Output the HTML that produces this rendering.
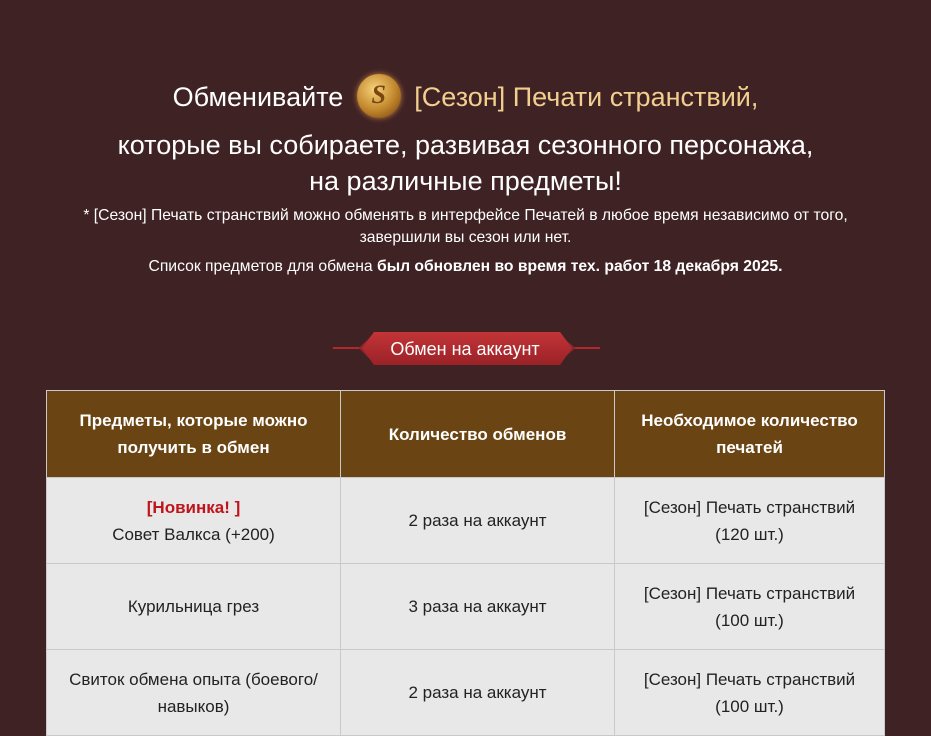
<!DOCTYPE html>
<html><head><meta charset="utf-8"><style>
body{margin:0;background:#3f2224;font-family:"Liberation Sans",sans-serif;width:931px;height:732px;overflow:hidden;position:relative;color:#fff}
.t{position:absolute;left:0;width:931px;text-align:center}
.big{font-size:27px;line-height:32px}
.sm{font-size:15.7px;line-height:22px}
.gold{color:#f2cf8e}
table{position:absolute;left:46px;top:390px;width:839px;border-collapse:collapse;font-size:17px}
td,th{border:1px solid #c9c9c9;text-align:center;line-height:27px;padding:0}
th{background:#6b4413;color:#fff;font-weight:bold;height:86px;padding:0 20px}
td{background:#e8e8e8;color:#222;height:85px}
</style></head><body>
<div class="t big" style="top:74px">Обменивайте <span style="display:inline-block;width:44px;height:44px;vertical-align:-12px;margin:0 6px;border-radius:50%;background:radial-gradient(circle at 40% 35%,#f6d27a,#c0852a 55%,#6a3a10 100%);box-shadow:0 0 6px #c08040;position:relative"><span style="position:absolute;left:0;right:0;top:6px;font:bold italic 26px 'Liberation Serif',serif;color:#7a4510;text-align:center">S</span></span> <span class="gold">[Сезон] Печати странствий,</span></div>
<div class="t big" style="top:129px">которые вы собираете, развивая сезонного персонажа,</div>
<div class="t big" style="top:165px">на различные предметы!</div>
<div class="t sm" style="top:205px">* [Сезон] Печать странствий можно обменять в интерфейсе Печатей в любое время независимо от того,<br>завершили вы сезон или нет.</div>
<div class="t sm" style="top:256px">Список предметов для обмена <b>был обновлен во время тех. работ 18 декабря 2025.</b></div>
<svg style="position:absolute;left:330px;top:328px" width="272" height="42">
<line x1="3" y1="20" x2="40" y2="20" stroke="#b3282c" stroke-width="2"/>
<line x1="235" y1="20" x2="270" y2="20" stroke="#b3282c" stroke-width="2"/>
<path d="M44 7 L30 20 L44 34" fill="none" stroke="#8a2528" stroke-width="2"/>
<path d="M228 7 L244 20 L228 34" fill="none" stroke="#8a2528" stroke-width="2"/>
<defs><linearGradient id="g" x1="0" y1="0" x2="0" y2="1"><stop offset="0" stop-color="#c33437"/><stop offset="1" stop-color="#9a2227"/></linearGradient></defs>
<path d="M44 4 L230 4 L242 20 L230 37 L44 37 L32 20 Z" fill="url(#g)"/>
<text x="135" y="27" text-anchor="middle" font-family="Liberation Sans" font-size="18" fill="#fff">Обмен на аккаунт</text>
</svg>
<table>
<tr><th style="width:253px">Предметы, которые можно получить в обмен</th><th style="width:233px">Количество обменов</th><th>Необходимое количество печатей</th></tr>
<tr><td><b style="color:#c0141c">[Новинка! ]</b><br>Совет Валкса (+200)</td><td>2 раза на аккаунт</td><td>[Сезон] Печать странствий<br>(120 шт.)</td></tr>
<tr><td>Курильница грез</td><td>3 раза на аккаунт</td><td>[Сезон] Печать странствий<br>(100 шт.)</td></tr>
<tr><td>Свиток обмена опыта (боевого/<br>навыков)</td><td>2 раза на аккаунт</td><td>[Сезон] Печать странствий<br>(100 шт.)</td></tr>
</table>
</body></html>
